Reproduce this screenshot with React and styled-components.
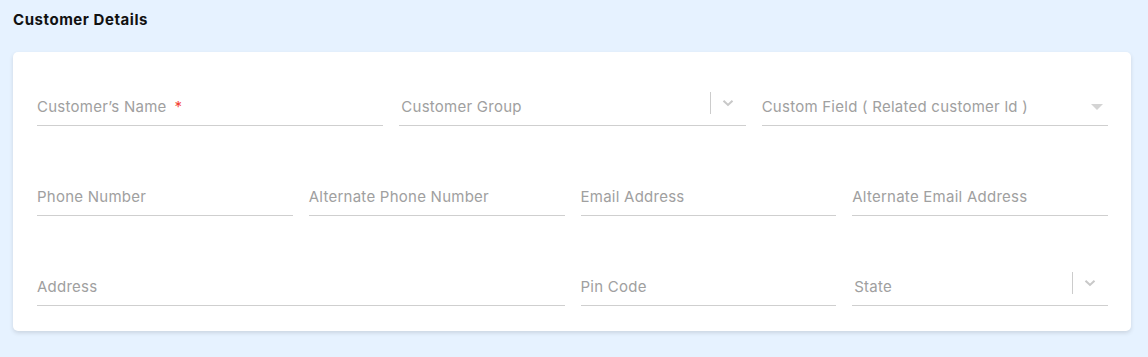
import React from 'react';
import styled, { createGlobalStyle } from 'styled-components';

const GlobalStyle = createGlobalStyle`
  body {
    margin: 0;
    background: #e6f2ff;
    font-family: Inter, "Open Sans", sans-serif;
  }
`;

const Page = styled.div`
  width: 1148px;
  height: 357px;
  box-sizing: border-box;
  padding: 10px 17px 0 13px;
  background: #e6f2ff;
`;

const Title = styled.h2`
  margin: 0;
  font-size: 15px;
  line-height: 20px;
  font-weight: 700;
  color: #111;
  letter-spacing: 0.55px;
`;

const Card = styled.div`
  margin-top: 22px;
  background: #fff;
  border-radius: 5px;
  box-shadow: 0 2px 4px rgba(0, 0, 0, 0.12);
  padding: 32px 23px 25px 24px;
  display: grid;
  grid-template-columns: repeat(12, 1fr);
  column-gap: 16px;
  row-gap: 48px;
`;

const Field = styled.div`
  grid-column: span ${(p) => p.$span};
  height: 42px;
  border-bottom: 1px solid #cfcfcf;
  display: flex;
  align-items: center;
  box-sizing: border-box;
  padding-top: 4px;
  padding-left: ${(p) => (p.$select ? '2px' : '0')};
`;

const Label = styled.span`
  flex: 1;
  font-size: 15px;
  color: #a0a0a0;
  letter-spacing: 0.25px;
`;

const Star = styled.span`
  color: #f44336;
  margin-left: 8px;
`;

const Indicators = styled.div`
  display: flex;
  align-items: center;
  gap: 11px;
  padding-right: 12px;
  margin-top: -8px;
`;

const Separator = styled.span`
  width: 1px;
  height: 22px;
  background: #cccccc;
`;

const Chevron = () => (
  <svg width="12" height="8" viewBox="0 0 12 8">
    <path d="M1.5 1.8 L6 6 L10.5 1.8" fill="none" stroke="#c8c8c8" strokeWidth="2" />
  </svg>
);

const Caret = styled.span`
  width: 0;
  height: 0;
  margin-right: 5px;
  border-left: 6px solid transparent;
  border-right: 6px solid transparent;
  border-top: 6px solid #d4d4d4;
`;

const fields = [
  { label: "Customer’s Name", span: 4, required: true },
  { label: 'Customer Group', span: 4, select: true },
  { label: 'Custom Field ( Related customer ld )', span: 4, caret: true },
  { label: 'Phone Number', span: 3 },
  { label: 'Alternate Phone Number', span: 3 },
  { label: 'Email Address', span: 3 },
  { label: 'Alternate Email Address', span: 3 },
  { label: 'Address', span: 6 },
  { label: 'Pin Code', span: 3 },
  { label: 'State', span: 3, select: true },
];

export default function App() {
  return (
    <Page>
      <GlobalStyle />
      <Title>Customer Details</Title>
      <Card>
        {fields.map((f) => (
          <Field key={f.label} $span={f.span} $select={f.select}>
            <Label>
              {f.label}
              {f.required && <Star>*</Star>}
            </Label>
            {f.select && (
              <Indicators>
                <Separator />
                <Chevron />
              </Indicators>
            )}
            {f.caret && <Caret />}
          </Field>
        ))}
      </Card>
    </Page>
  );
}
